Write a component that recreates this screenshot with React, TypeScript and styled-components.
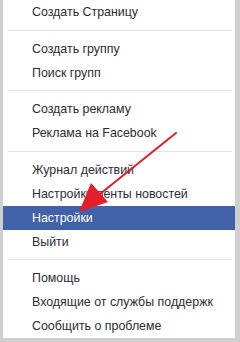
import React from "react";
import styled, { createGlobalStyle } from "styled-components";

const Global = createGlobalStyle`
  html, body { margin: 0; padding: 0; background: #cfcfcf; }
  body { font-family: "Liberation Sans", Arial, sans-serif; }
`;

const Frame = styled.div`
  position: relative;
  width: 240px;
  height: 342px;
  box-sizing: border-box;
  padding: 0 5px 4px 3px;
  background: #cfcfcf;
  overflow: hidden;
`;

const Menu = styled.ul`
  list-style: none;
  margin: 0;
  padding: 0;
  height: 100%;
  background: #ffffff;
  display: flex;
  flex-direction: column;
`;

const Item = styled.li<{ $active?: boolean }>`
  height: 24px;
  display: flex;
  align-items: center;
  padding-left: 29px;
  font-size: 12.4px;
  color: ${(p) => (p.$active ? "#ffffff" : "#2a2d33")};
  background: ${(p) => (p.$active ? "#4161a9" : "transparent")};
  white-space: nowrap;
`;

const Separator = styled.li`
  height: 13px;
  display: flex;
  align-items: center;
  padding: 0 3px 0 5px;
  &::after {
    content: "";
    flex: 1;
    height: 1px;
    background: #e3e4e6;
  }
`;

const Arrow = styled.svg`
  position: absolute;
  left: 0;
  top: 0;
  width: 240px;
  height: 342px;
  pointer-events: none;
`;

type Entry = { label: string; active?: boolean } | "sep";

const entries: Entry[] = [
  { label: "Создать Страницу" },
  "sep",
  { label: "Создать группу" },
  { label: "Поиск групп" },
  "sep",
  { label: "Создать рекламу" },
  { label: "Реклама на Facebook" },
  "sep",
  { label: "Журнал действий" },
  { label: "Настройки ленты новостей" },
  { label: "Настройки", active: true },
  { label: "Выйти" },
  "sep",
  { label: "Помощь" },
  { label: "Входящие от службы поддержк" },
  { label: "Сообщить о проблеме" },
];

export default function App() {
  return (
    <>
      <Global />
      <Frame>
        <Menu>
          {entries.map((e, i) =>
            e === "sep" ? (
              <Separator key={i} />
            ) : (
              <Item key={i} $active={e.active}>
                {e.label}
              </Item>
            )
          )}
        </Menu>
        <Arrow viewBox="0 0 240 342">
          <line x1="176" y1="133" x2="100" y2="194" stroke="#d8202a" strokeWidth="2" strokeLinecap="round" />
          <polygon points="79,212 91,183 108,202" fill="#e41f2a" />
        </Arrow>
      </Frame>
    </>
  );
}
